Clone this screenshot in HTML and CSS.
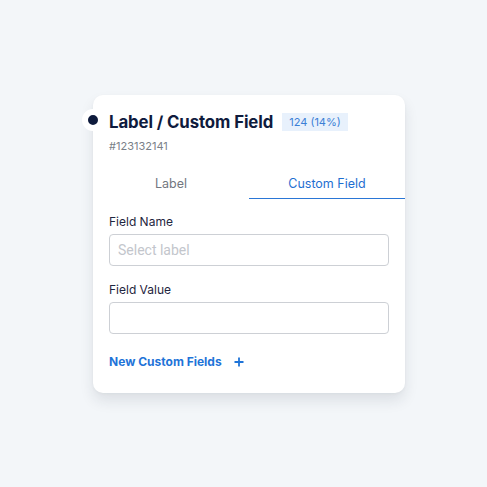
FILE: index.html
```html
<!DOCTYPE html>
<html>
<head>
<meta charset="utf-8">
<link rel="stylesheet" href="styles.css">
</head>
<body>
<div class="card">
  <span class="dot"></span>
  <div class="header">
    <h1 class="title">Label / Custom Field</h1>
    <span class="badge">124 (14%)</span>
  </div>
  <div class="id">#123132141</div>
  <div class="tabs">
    <div class="tab">Label</div>
    <div class="tab active">Custom Field</div>
  </div>
  <label class="field-label">Field Name</label>
  <input class="input" type="text" placeholder="Select label">
  <label class="field-label second">Field Value</label>
  <input class="input" type="text">
  <div class="add-link">
    <span>New Custom Fields</span>
    <svg class="plus" width="10" height="10" viewBox="0 0 10 10"><path d="M5 0.5V9.5M0.5 5H9.5" stroke="#1f74d8" stroke-width="1.8" fill="none"/></svg>
  </div>
</div>
</body>
</html>
```

FILE: styles.css
```css
html, body {
  margin: 0;
  padding: 0;
}
body {
  background: #f3f6f9;
  width: 487px;
  height: 487px;
  font-family: "Inter", "Liberation Sans", sans-serif;
  display: flex;
  align-items: flex-start;
  padding: 95px 0 0 93px;
  box-sizing: border-box;
}
.card {
  position: relative;
  width: 312px;
  height: 298px;
  box-sizing: border-box;
  background: #ffffff;
  border-radius: 10px;
  box-shadow: 0 8px 14px rgba(30, 40, 60, 0.10), 0 1px 3px rgba(30, 40, 60, 0.04);
  padding: 16px 16px 0 16px;
  display: flex;
  flex-direction: column;
}
.dot {
  position: absolute;
  left: -11px;
  top: 14px;
  width: 10px;
  height: 10px;
  border: 6px solid #ffffff;
  border-radius: 50%;
  background: #0d1a3c;
}
.header {
  display: flex;
  align-items: center;
  gap: 9px;
}
.title {
  margin: 0;
  font-size: 16.8px;
  line-height: 22px;
  font-weight: 700;
  color: #0f1b3d;
  letter-spacing: -0.1px;
}
.badge {
  background: #e8f1fc;
  color: #3b7fd6;
  font-size: 11px;
  line-height: 18px;
  padding: 0 7px;
  height: 18px;
}
.id {
  margin-top: 5px;
  font-size: 11px;
  line-height: 16px;
  color: #7a7f88;
}
.tabs {
  display: flex;
  margin: 12px -16px 0 -16px;
}
.tab {
  flex: 1;
  text-align: center;
  font-size: 12.5px;
  line-height: 16px;
  padding: 10px 0 6px;
  color: #737780;
  border-bottom: 1px solid transparent;
}
.tab.active {
  color: #1f6fd1;
  border-bottom: 1px solid #2a76d6;
}
.field-label {
  margin-top: 15px;
  font-size: 12px;
  line-height: 16px;
  color: #1f2640;
}
.field-label.second {
  margin-top: 16px;
}
.input {
  margin-top: 4px;
  height: 32px;
  box-sizing: border-box;
  border: 1px solid #cdd0d5;
  border-radius: 4px;
  padding: 0 8px;
  font-family: "Roboto", "Inter", sans-serif;
  font-size: 14px;
  color: #1f2640;
  outline: none;
  background: #fff;
}
.input::placeholder {
  color: #c3c6cc;
}
.add-link {
  margin-top: 20px;
  display: flex;
  align-items: center;
  gap: 12px;
  font-size: 12px;
  line-height: 16px;
  font-weight: 700;
  color: #1f74d8;
}
.plus {
  display: block;
}
```
